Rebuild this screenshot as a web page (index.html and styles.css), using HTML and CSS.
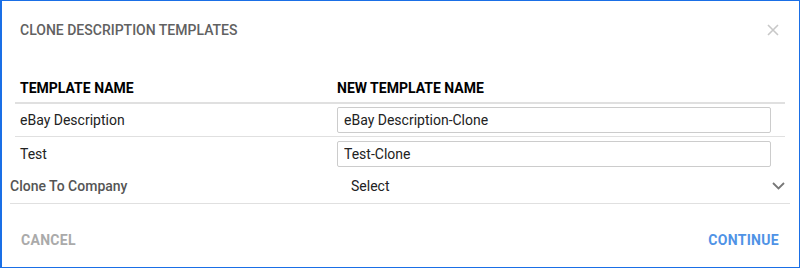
FILE: index.html
```html
<!DOCTYPE html>
<html lang="en">
<head>
    <meta charset="UTF-8">
    <meta name="viewport" content="width=device-width, initial-scale=1.0">
    <title>Clone Description Templates</title>
    <link rel="stylesheet" href="styles.css">
</head>
<body>
    <div class="dialog">
        <div class="dialog-header">
            <h1 class="dialog-title">CLONE DESCRIPTION TEMPLATES</h1>
            <button class="close-btn" aria-label="Close">
                <svg width="12" height="12" viewBox="0 0 12 12"><path d="M1 1L11 11M11 1L1 11" stroke="#c8c8c8" stroke-width="1.6" fill="none"/></svg>
            </button>
        </div>

        <div class="clone-table">
            <div class="row head-row">
                <div class="cell">TEMPLATE NAME</div>
                <div class="cell">NEW TEMPLATE NAME</div>
            </div>
            <div class="row">
                <div class="cell">eBay Description</div>
                <div class="cell"><input type="text" class="name-input" value="eBay Description-Clone"></div>
            </div>
            <div class="row last-row">
                <div class="cell">Test</div>
                <div class="cell"><input type="text" class="name-input" value="Test-Clone"></div>
            </div>
        </div>

        <div class="company-row">
            <label class="company-label">Clone To Company</label>
            <div class="company-select">
                <span>Select</span>
                <svg width="13" height="8" viewBox="0 0 13 8"><path d="M1 1L6.5 6.5L12 1" stroke="#777" stroke-width="1.8" fill="none"/></svg>
            </div>
        </div>

        <div class="dialog-footer">
            <button class="text-btn cancel-btn">CANCEL</button>
            <button class="text-btn continue-btn">CONTINUE</button>
        </div>
    </div>
</body>
</html>
```

FILE: styles.css
```css
* { box-sizing: border-box; }
body { margin: 0; font-family: Roboto, "Liberation Sans", sans-serif; background-color: #fff; }
.dialog { height: 268px; border: 1px solid #1a6fe6; border-left-width: 2px; background-color: #fff; }
.dialog-header { display: flex; align-items: center; justify-content: space-between; padding: 19px 20px 0 18px; height: 39px; }
.dialog-title { margin: 0; font-size: 14px; font-weight: 500; color: #616161; }
.close-btn { background: none; border: none; padding: 0; width: 12px; height: 12px; display: flex; cursor: pointer; }
.clone-table { margin: 36px 14px 0 13px; }
.row { display: grid; grid-template-columns: 322px 1fr; align-items: center; height: 33px; border-bottom: 1px solid #e0e0e0; }
.head-row { height: 28px; border-bottom: 2px solid #e0e0e0; align-items: end; padding-bottom: 6px; }
.last-row { border-bottom: none; }
.cell { padding: 0 0 0 5px; font-size: 14px; color: #222; }
.cell + .cell { padding: 0 14px 0 0; }
.head-row .cell { font-weight: 700; color: #000; }
.name-input { display: block; width: 100%; height: 26px; border: 1px solid #ccc; border-radius: 2px; padding: 0 6px; font-family: inherit; font-size: 14px; color: #222; }
.company-row { display: grid; grid-template-columns: 341px 1fr; align-items: center; margin: 0 9px 0 8px; height: 34px; padding-bottom: 2px; border-bottom: 1px solid #e0e0e0; }
.company-label { font-size: 14px; font-weight: 500; color: #555; }
.company-select { display: flex; justify-content: space-between; align-items: center; font-size: 14px; color: #222; padding-right: 5px; }
.dialog-footer { display: flex; justify-content: space-between; align-items: center; padding: 0 20px 0 19px; height: 72px; }
.text-btn { background: none; border: none; padding: 0; font-family: inherit; font-size: 14px; font-weight: 700; letter-spacing: 0.3px; cursor: pointer; }
.cancel-btn { color: #aaa; }
.continue-btn { color: #4f93e6; }
```
